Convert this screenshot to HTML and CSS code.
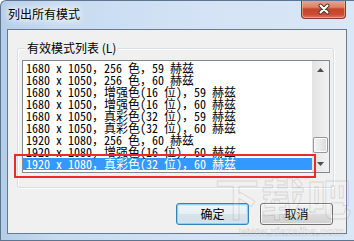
FILE: index.html
```html
<!DOCTYPE html>
<html lang="zh-CN">
<head>
<meta charset="utf-8">
<title>列出所有模式</title>
<link rel="stylesheet" href="styles.css">
</head>
<body>
<div class="window">
  <div class="titlebar">
    <span class="title">列出所有模式</span>
    <div class="close">
      <svg width="14" height="12" viewBox="0 0 14 12"><path d="M3.5 2.5 L10.5 9.5 M10.5 2.5 L3.5 9.5" stroke="#4a3a3a" stroke-width="4" stroke-linecap="round"/><path d="M3.5 2.5 L10.5 9.5 M10.5 2.5 L3.5 9.5" stroke="#ffffff" stroke-width="2" stroke-linecap="round"/></svg>
    </div>
  </div>
  <div class="client">
    <div class="group">
      <span class="legend">有效模式列表 (L)</span>
      <div class="listbox">
        <ul class="items">
          <li>1680 x 1050，256 色，59 赫兹</li>
          <li>1680 x 1050，256 色，60 赫兹</li>
          <li>1680 x 1050，增强色(16 位)，59 赫兹</li>
          <li>1680 x 1050，增强色(16 位)，60 赫兹</li>
          <li>1680 x 1050，真彩色(32 位)，59 赫兹</li>
          <li>1680 x 1050，真彩色(32 位)，60 赫兹</li>
          <li>1920 x 1080，256 色，60 赫兹</li>
          <li>1920 x 1080，增强色(16 位)，60 赫兹</li>
          <li class="sel">1920 x 1080，真彩色(32 位)，60 赫兹</li>
        </ul>
        <div class="scrollbar">
          <div class="arrow"><svg width="7" height="4" viewBox="0 0 7 4"><polygon points="3.5,0 7,4 0,4" fill="#4d4d4d"/></svg></div>
          <div class="track"><div class="thumb" style="margin-top:59px"></div></div>
          <div class="arrow"><svg width="7" height="4" viewBox="0 0 7 4"><polygon points="0,0 7,0 3.5,4" fill="#4d4d4d"/></svg></div>
        </div>
      </div>
    </div>
    <div class="buttons">
      <div class="btn default">确定</div>
      <div class="btn">取消</div>
    </div>
  </div>
  <div class="mark"></div>
  <div class="watermark">下载吧</div>
  <div class="watermark-url">www.xiazaiba.com</div>
</div>
</body>
</html>
```
FILE: styles.css
```css
html, body {
  margin: 0;
  padding: 0;
  background: #ffffff;
}
.window {
  position: relative;
  box-sizing: border-box;
  width: 354px;
  height: 241px;
  display: flex;
  flex-direction: column;
  padding: 0 7px 6px 6px;
  border-top: 1px solid #5d7590;
  border-left: 1px solid #5d7590;
  border-bottom: 1px solid #5d7590;
  border-top-left-radius: 6px;
  background: linear-gradient(to right, #b4cde8 0%, #c6daf0 15%, #d3e3f5 55%, #d9e7f6 100%);
  overflow: hidden;
  font-family: "Noto Sans CJK SC", "Noto Sans", sans-serif;
}
.titlebar {
  height: 28px;
  display: flex;
  justify-content: space-between;
  align-items: flex-start;
  flex: none;
}
.title {
  padding: 6px 0 0 1px;
  font-size: 12px;
  line-height: 14px;
  color: #000;
  text-shadow: 0 0 6px #ffffff, 0 0 10px #ffffff, 0 0 14px #ffffff;
}
.close {
  width: 43px;
  height: 18px;
  margin-top: -1px;
  margin-right: 1px;
  display: flex;
  align-items: center;
  justify-content: center;
  border: 1px solid #7d3a30;
  border-top: none;
  border-radius: 0 0 4px 4px;
  background: linear-gradient(#e6a896 0%, #d98369 40%, #c4452b 50%, #cc4a30 80%, #e0795e 100%);
  box-shadow: inset 0 0 0 1px rgba(255, 200, 180, 0.5);
}
.client {
  flex: 1;
  display: flex;
  flex-direction: column;
  border: 1px solid #687a8e;
  background: #f0f0f0;
  padding: 18px 0 0 9px;
}
.group {
  position: relative;
  box-sizing: border-box;
  width: 317px;
  height: 140px;
  border: 1px solid #d5dfe5;
  border-radius: 3px;
  box-shadow: inset 1px 1px 0 #ffffff, 1px 1px 0 #ffffff;
  padding: 11px 0 0 4px;
}
.legend {
  position: absolute;
  left: 7px;
  top: -8px;
  padding: 0 2px;
  background: #f0f0f0;
  font-size: 12px;
  line-height: 14px;
  color: #000;
}
.listbox {
  box-sizing: border-box;
  width: 308px;
  height: 113px;
  border: 1px solid #828790;
  background: #ffffff;
  display: flex;
}
.items {
  flex: 1;
  margin: 0;
  padding: 1px 0 0 0;
  list-style: none;
  overflow: hidden;
}
.items li {
  height: 12px;
  line-height: 12px;
  padding-left: 3px;
  font-family: "Noto Sans Mono CJK SC", "Noto Sans CJK SC", "Liberation Mono", monospace;
  font-size: 12px;
  white-space: nowrap;
  color: #000;
}
.items li.sel {
  background: #3399ff;
  color: #ffffff;
}
.scrollbar {
  width: 17px;
  display: flex;
  flex-direction: column;
  background: linear-gradient(to right, #e3e3e3, #f2f2f2);
}
.arrow {
  height: 17px;
  display: flex;
  align-items: center;
  justify-content: center;
  flex: none;
}
.track {
  flex: 1;
}
.thumb {
  box-sizing: border-box;
  width: 15px;
  height: 16px;
  margin-left: 1px;
  border: 1px solid #979797;
  border-radius: 2px;
  background: linear-gradient(to right, #f3f3f3 0%, #e9e9e9 50%, #d9d9d9 100%);
  box-shadow: inset 0 0 0 1px #fbfbfb;
}
.buttons {
  display: flex;
  justify-content: flex-end;
  gap: 11px;
  padding-right: 13px;
  margin-top: 15px;
}
.btn {
  box-sizing: border-box;
  width: 73px;
  height: 22px;
  border: 1px solid #707070;
  border-radius: 3px;
  background: linear-gradient(#f2f2f2 0%, #ebebeb 48%, #dddddd 52%, #cfcfcf 100%);
  box-shadow: inset 0 0 0 1px rgba(255, 255, 255, 0.75);
  font-size: 12px;
  line-height: 20px;
  text-align: center;
  color: #000;
}
.btn.default {
  border-color: #3c7fb1;
  background: linear-gradient(#eef6fb 0%, #e6eff5 48%, #d8e3ea 52%, #d3dee6 100%);
  box-shadow: inset 0 0 0 1px #8ed0f3, inset 0 0 0 2px rgba(200, 235, 252, 0.8);
}
.mark {
  position: absolute;
  left: 13px;
  top: 153px;
  width: 302px;
  height: 24px;
  box-sizing: border-box;
  border: 2px solid #ec2a2a;
}
.watermark {
  position: absolute;
  left: 214px;
  top: 170px;
  font-size: 44px;
  line-height: 52px;
  font-weight: bold;
  letter-spacing: 2px;
  color: rgba(255, 255, 255, 0.15);
  -webkit-text-stroke: 1px rgba(120, 120, 120, 0.22);
  pointer-events: none;
}
.watermark-url {
  position: absolute;
  left: 238px;
  top: 225px;
  font-family: "Liberation Sans", sans-serif;
  font-size: 12px;
  line-height: 12px;
  font-weight: bold;
  color: rgba(255, 255, 255, 0.2);
  -webkit-text-stroke: 0.6px rgba(120, 120, 120, 0.25);
  pointer-events: none;
}
```
